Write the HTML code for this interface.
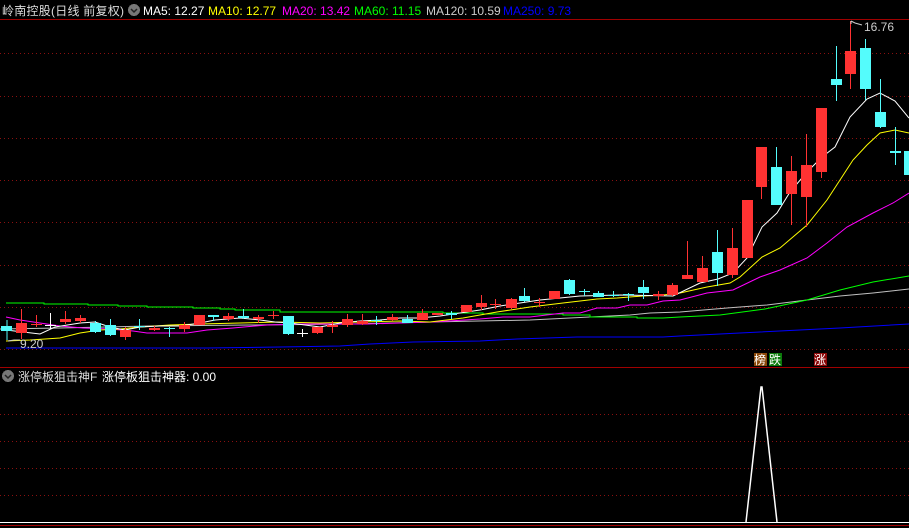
<!DOCTYPE html>
<html><head><meta charset="utf-8"><style>
html,body{margin:0;padding:0;background:#000;width:909px;height:528px;overflow:hidden}
svg{position:absolute;left:0;top:0}
.t{font-family:"Liberation Sans","Noto Sans CJK SC",sans-serif;font-size:12px}
</style></head><body>
<svg width="909" height="528" viewBox="0 0 909 528" shape-rendering="crispEdges">
<g stroke="#8a1010" stroke-dasharray="1,3" stroke-width="1">
<line x1="0" y1="53.5" x2="909" y2="53.5"/><line x1="0" y1="96.5" x2="909" y2="96.5"/><line x1="0" y1="138.5" x2="909" y2="138.5"/><line x1="0" y1="180.5" x2="909" y2="180.5"/><line x1="0" y1="222.5" x2="909" y2="222.5"/><line x1="0" y1="265.5" x2="909" y2="265.5"/><line x1="0" y1="307.5" x2="909" y2="307.5"/><line x1="0" y1="349.5" x2="909" y2="349.5"/>
<line x1="0" y1="414.5" x2="909" y2="414.5"/><line x1="0" y1="441.5" x2="909" y2="441.5"/><line x1="0" y1="468.5" x2="909" y2="468.5"/><line x1="0" y1="495.5" x2="909" y2="495.5"/>
</g>
<line x1="0" y1="19.5" x2="909" y2="19.5" stroke="#a00000"/>
<line x1="0" y1="367.5" x2="909" y2="367.5" stroke="#a00000"/>
<line x1="0" y1="525.5" x2="909" y2="525.5" stroke="#a00000"/>
<g fill="none" stroke-width="1" shape-rendering="auto">
<polyline stroke="#0000ff" points="6,348 207,348 280,347 340,346 370,344 413,342 480,341 517,339 547,338 577,337 663,337 680,336 760,332 840,328 909,324"/>
<polyline stroke="#c0c0c0" points="0,329 60,328 150,326 250,325 350,324 430,322 530,320 590,317 630,315 650,313 680,312 727,308 767,305 807,300 840,296 873,293 909,289"/>
<polyline stroke="#00ff00" points="6,303 44,303 44,304 88,304 88,305 118,305 118,306 147,306 147,307 193,307 193,308 220,308 220,309 235,309 235,310 280,310 280,312 443,312 443,313 483,313 483,314 563,314 563,315 590,315 590,317 637,317 637,318 663,318 680,317 720,315 765,309 807,300 840,290 873,282 909,276"/>
<polyline stroke="#ff00ff" points="6,317 20,320 40,323 60,326 83,328 110,329 133,331 147,333 187,333 207,330 233,328 267,325 300,324 367,324 400,323 433,322 480,319 503,317 530,317 563,313 580,313 597,308 617,308 630,305 647,305 663,301 680,300 707,293 733,290 760,277 780,270 807,258 827,243 847,227 873,213 893,203 909,193"/>
<polyline stroke="#ffff00" points="6,341 30,340 60,338 80,333 100,330 120,329 140,327 170,325 200,324 240,323 280,322 320,323 360,322 400,321 430,322 463,318 497,312 530,307 563,303 597,299 617,298 643,296 663,295 680,293 707,287 730,283 740,277 762,257 780,248 807,225 827,200 840,180 853,160 867,145 880,133 895,130 909,133"/>
<polyline stroke="#ffffff" points="6,330 40,334 55,327 80,323 95,322 110,327 125,330 140,327 160,326 180,326 200,323 215,320 240,318 260,320 275,322 290,323 305,325 320,327 340,323 360,321 380,320 400,318 420,318 440,316 460,313 480,310 500,306 520,303 540,300 560,298 580,296 620,295 673,296 700,283 718,279 733,273 747,258 762,227 777,213 790,192 807,172 822,157 835,147 850,117 867,99 880,93 895,101 909,118"/>
</g>
<g id="c">
<g stroke-width="1">
<line x1="7" y1="320" x2="7" y2="340" stroke="#54fcfc"/>
<line x1="21.5" y1="309" x2="21.5" y2="339" stroke="#ff3232"/>
<line x1="36.5" y1="315" x2="36.5" y2="327" stroke="#ff3232"/>
<line x1="50.5" y1="313" x2="50.5" y2="329" stroke="#fff"/>
<line x1="65.5" y1="311" x2="65.5" y2="324" stroke="#ff3232"/>
<line x1="80.5" y1="315" x2="80.5" y2="323" stroke="#ff3232"/>
<line x1="95.5" y1="321" x2="95.5" y2="333" stroke="#54fcfc"/>
<line x1="110.5" y1="319" x2="110.5" y2="336" stroke="#54fcfc"/>
<line x1="125.5" y1="327" x2="125.5" y2="340" stroke="#ff3232"/>
<line x1="139.5" y1="319" x2="139.5" y2="330" stroke="#54fcfc"/>
<line x1="154.5" y1="326" x2="154.5" y2="331" stroke="#ff3232"/>
<line x1="169.5" y1="327" x2="169.5" y2="337" stroke="#54fcfc"/>
<line x1="184.5" y1="322" x2="184.5" y2="332" stroke="#ff3232"/>
<line x1="213.5" y1="315" x2="213.5" y2="321" stroke="#54fcfc"/>
<line x1="228.5" y1="313" x2="228.5" y2="321" stroke="#ff3232"/>
<line x1="243.5" y1="309" x2="243.5" y2="319" stroke="#54fcfc"/>
<line x1="258.5" y1="315" x2="258.5" y2="323" stroke="#ff3232"/>
<line x1="273.5" y1="311" x2="273.5" y2="319" stroke="#ff3232"/>
<line x1="288.5" y1="316" x2="288.5" y2="335" stroke="#54fcfc"/>
<line x1="302.5" y1="329" x2="302.5" y2="337" stroke="#fff"/>
<line x1="317.5" y1="327" x2="317.5" y2="334" stroke="#ff3232"/>
<line x1="332.5" y1="321" x2="332.5" y2="333" stroke="#ff3232"/>
<line x1="347.5" y1="314" x2="347.5" y2="327" stroke="#ff3232"/>
<line x1="362.5" y1="314" x2="362.5" y2="325" stroke="#ff3232"/>
<line x1="376.5" y1="316" x2="376.5" y2="325" stroke="#54fcfc"/>
<line x1="392.5" y1="314" x2="392.5" y2="321" stroke="#ff3232"/>
<line x1="407.5" y1="315" x2="407.5" y2="323" stroke="#54fcfc"/>
<line x1="422.5" y1="309" x2="422.5" y2="320" stroke="#ff3232"/>
<line x1="451.5" y1="311" x2="451.5" y2="319" stroke="#54fcfc"/>
<line x1="481.5" y1="295" x2="481.5" y2="310" stroke="#ff3232"/>
<line x1="495.5" y1="299" x2="495.5" y2="309" stroke="#ff3232"/>
<line x1="511.5" y1="298" x2="511.5" y2="309" stroke="#ff3232"/>
<line x1="524.5" y1="288" x2="524.5" y2="302" stroke="#54fcfc"/>
<line x1="539.5" y1="298" x2="539.5" y2="307" stroke="#ff3232"/>
<line x1="569.5" y1="279" x2="569.5" y2="295" stroke="#54fcfc"/>
<line x1="584.5" y1="289" x2="584.5" y2="296" stroke="#54fcfc"/>
<line x1="598.5" y1="291" x2="598.5" y2="297" stroke="#54fcfc"/>
<line x1="613.5" y1="291" x2="613.5" y2="297" stroke="#54fcfc"/>
<line x1="628.5" y1="293" x2="628.5" y2="301" stroke="#54fcfc"/>
<line x1="643.5" y1="280" x2="643.5" y2="299" stroke="#54fcfc"/>
<line x1="658.5" y1="291" x2="658.5" y2="300" stroke="#ff3232"/>
<line x1="672.5" y1="283" x2="672.5" y2="296" stroke="#ff3232"/>
<line x1="687.5" y1="241" x2="687.5" y2="279" stroke="#ff3232"/>
<line x1="702.5" y1="256" x2="702.5" y2="282" stroke="#ff3232"/>
<line x1="717.5" y1="230" x2="717.5" y2="286" stroke="#54fcfc"/>
<line x1="732.5" y1="228" x2="732.5" y2="278" stroke="#ff3232"/>
<line x1="761.5" y1="147" x2="761.5" y2="199" stroke="#ff3232"/>
<line x1="776.5" y1="147" x2="776.5" y2="205" stroke="#54fcfc"/>
<line x1="791.5" y1="156" x2="791.5" y2="225" stroke="#ff3232"/>
<line x1="806.5" y1="134" x2="806.5" y2="227" stroke="#ff3232"/>
<line x1="821.5" y1="108" x2="821.5" y2="178" stroke="#ff3232"/>
<line x1="836.5" y1="46" x2="836.5" y2="101" stroke="#54fcfc"/>
<line x1="850.5" y1="21" x2="850.5" y2="89" stroke="#ff3232"/>
<line x1="865.5" y1="39" x2="865.5" y2="100" stroke="#54fcfc"/>
<line x1="880.5" y1="79" x2="880.5" y2="128" stroke="#54fcfc"/>
<line x1="895.5" y1="127" x2="895.5" y2="165" stroke="#54fcfc"/>
</g>
<g fill="#54fcfc">
<rect x="1" y="326" width="11" height="5"/><rect x="90" y="323" width="11" height="9"/><rect x="105" y="325" width="11" height="10"/><rect x="134" y="326" width="11" height="1"/><rect x="164" y="328" width="11" height="1"/><rect x="208" y="315" width="11" height="2"/><rect x="238" y="316" width="11" height="2"/><rect x="283" y="316" width="11" height="18"/><rect x="371" y="320" width="11" height="1"/><rect x="402" y="319" width="11" height="4"/><rect x="446" y="313" width="11" height="2"/><rect x="519" y="296" width="11" height="5"/><rect x="564" y="280" width="11" height="14"/><rect x="579" y="291" width="11" height="1"/><rect x="593" y="293" width="11" height="4"/><rect x="608" y="295" width="11" height="1"/><rect x="623" y="294" width="11" height="1"/><rect x="638" y="287" width="11" height="6"/><rect x="712" y="252" width="11" height="21"/><rect x="771" y="167" width="11" height="38"/><rect x="831" y="79" width="11" height="6"/><rect x="860" y="48" width="11" height="41"/><rect x="875" y="112" width="11" height="15"/><rect x="890" y="151" width="11" height="2"/><rect x="904" y="151" width="11" height="24"/>
</g>
<g fill="#ff3232">
<rect x="16" y="323" width="11" height="10"/><rect x="31" y="324" width="11" height="1"/><rect x="60" y="319" width="11" height="3"/><rect x="75" y="318" width="11" height="3"/><rect x="120" y="330" width="11" height="7"/><rect x="149" y="328" width="11" height="2"/><rect x="179" y="325" width="11" height="4"/><rect x="194" y="315" width="11" height="10"/><rect x="223" y="316" width="11" height="3"/><rect x="253" y="317" width="11" height="2"/><rect x="268" y="315" width="11" height="1"/><rect x="312" y="327" width="11" height="6"/><rect x="327" y="325" width="11" height="2"/><rect x="342" y="319" width="11" height="6"/><rect x="357" y="321" width="11" height="3"/><rect x="387" y="317" width="11" height="3"/><rect x="417" y="313" width="11" height="7"/><rect x="432" y="313" width="11" height="2"/><rect x="461" y="305" width="11" height="7"/><rect x="476" y="303" width="11" height="4"/><rect x="490" y="304" width="11" height="1"/><rect x="506" y="299" width="11" height="9"/><rect x="534" y="302" width="11" height="1"/><rect x="549" y="291" width="11" height="8"/><rect x="653" y="294" width="11" height="2"/><rect x="667" y="285" width="11" height="10"/><rect x="682" y="275" width="11" height="4"/><rect x="697" y="268" width="11" height="14"/><rect x="727" y="248" width="11" height="27"/><rect x="742" y="200" width="11" height="58"/><rect x="756" y="147" width="11" height="40"/><rect x="786" y="171" width="11" height="23"/><rect x="801" y="165" width="11" height="32"/><rect x="816" y="108" width="11" height="64"/><rect x="845" y="51" width="11" height="23"/>
</g>
<g fill="#fff"><rect x="45" y="325" width="11" height="1"/><rect x="297" y="333" width="11" height="1"/></g>
</g>
<polyline points="851,21 855,23 862,25" fill="none" stroke="#ccc" shape-rendering="auto"/>
<line x1="851" y1="21" x2="851" y2="24" stroke="#ccc"/>
<text x="864" y="31" class="t" fill="#ccc">16.76</text>
<polyline points="8,341 14,340 20,340" fill="none" stroke="#ccc" shape-rendering="auto"/>
<text x="20" y="348" class="t" fill="#ccc">9.20</text>
<line x1="0" y1="522.5" x2="909" y2="522.5" stroke="#fff"/>
<polyline points="746,522 761,387 762,387 777,522" fill="none" stroke="#fff" stroke-width="1.5" shape-rendering="auto"/>
<rect x="754" y="353" width="13" height="13" fill="#8b4a0a"/><text x="754" y="364" class="t" fill="#fff">榜</text>
<rect x="769" y="353" width="13" height="13" fill="#0a7a0a"/><text x="769" y="364" class="t" fill="#fff">跌</text>
<rect x="814" y="353" width="13" height="13" fill="#8a0808"/><text x="814" y="364" class="t" fill="#fff">涨</text>
<text x="2" y="15" class="t" fill="#ddd" textLength="122" lengthAdjust="spacing">岭南控股(日线 前复权)</text>
<circle cx="134" cy="10" r="6" fill="#777"/><polyline points="131,9 134,12 137,9" fill="none" stroke="#222" stroke-width="1.5" shape-rendering="auto"/>
<text x="143" y="15" class="t" fill="#fff">MA5: 12.27</text>
<text x="208" y="15" class="t" fill="#ffff00">MA10: 12.77</text>
<text x="282" y="15" class="t" fill="#ff00ff">MA20: 13.42</text>
<text x="354" y="15" class="t" fill="#00ff00">MA60: 11.15</text>
<text x="426" y="15" class="t" fill="#ccc">MA120: 10.59</text>
<text x="503" y="15" class="t" fill="#0000ff">MA250: 9.73</text>
<circle cx="8" cy="376" r="6" fill="#777"/><polyline points="5,375 8,378 11,375" fill="none" stroke="#222" stroke-width="1.5" shape-rendering="auto"/>
<text x="18" y="381" class="t" fill="#ddd">涨停板狙击神F</text>
<text x="102" y="381" class="t" fill="#fff">涨停板狙击神器: 0.00</text>
</svg>
</body></html>
